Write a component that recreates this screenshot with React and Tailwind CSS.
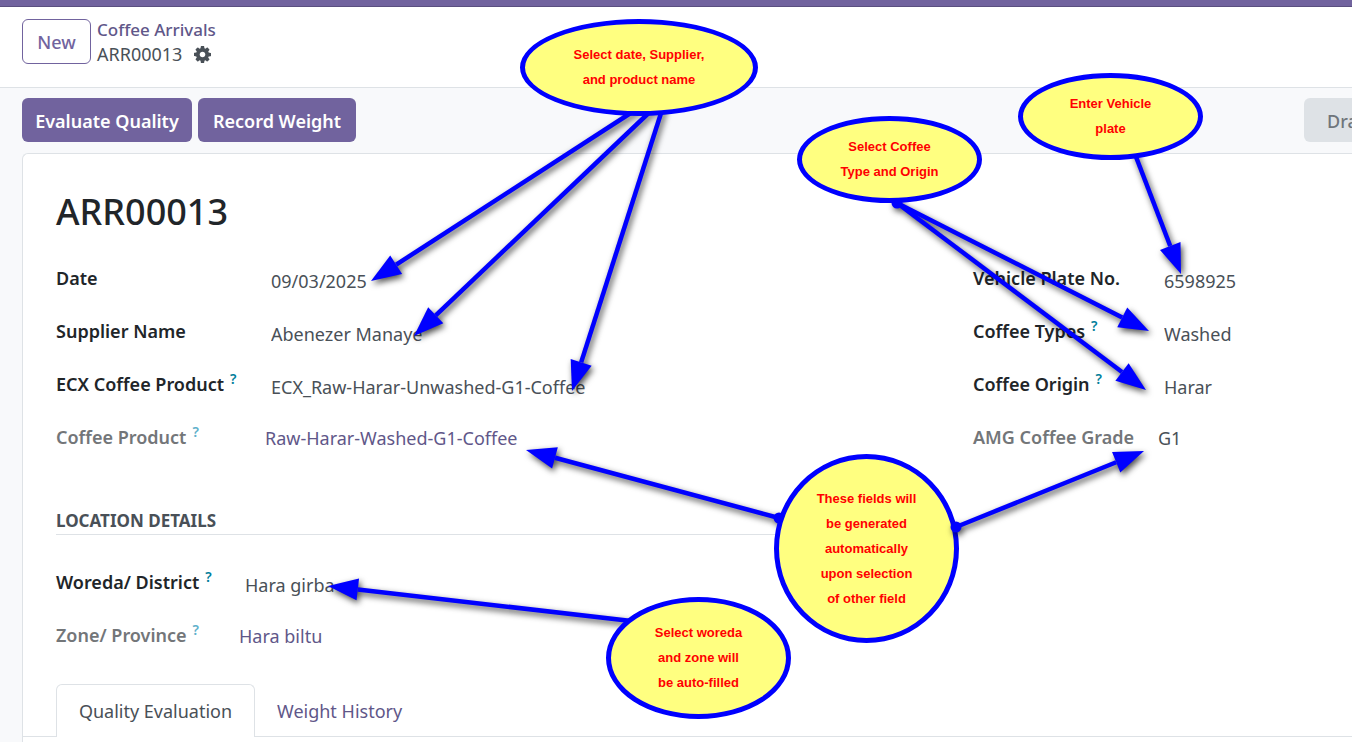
import React from "react";

const arrivalFields = [
  { id: "date", label: "Date", value: "09/03/2025" },
  { id: "supplier", label: "Supplier Name", value: "Abenezer Manaye" },
  { id: "ecx-product", label: "ECX Coffee Product", value: "ECX_Raw-Harar-Unwashed-G1-Coffee", help: true },
  { id: "coffee-product", label: "Coffee Product", value: "Raw-Harar-Washed-G1-Coffee", help: true, readOnly: true, link: true },
];

const coffeeFields = [
  { id: "plate", label: "Vehicle Plate No.", value: "6598925" },
  { id: "types", label: "Coffee Types", value: "Washed", help: true },
  { id: "origin", label: "Coffee Origin", value: "Harar", help: true },
  { id: "grade", label: "AMG Coffee Grade", value: "G1", readOnly: true },
];

const locationFields = [
  { id: "woreda", label: "Woreda/ District", value: "Hara girba", help: true },
  { id: "zone", label: "Zone/ Province", value: "Hara biltu", help: true, readOnly: true, link: true },
];

function CogIcon() {
  return (
    <svg viewBox="0 128 1536 1536" className="size-[17px] fill-current" aria-hidden="true">
      <path d="M1024 896q0-106-75-181t-181-75-181 75-75 181 75 181 181 75 181-75 75-181zm512-109v222q0 12-8 23t-20 13l-185 28q-19 54-39 91 35 50 107 138 10 12 10 25t-9 23q-27 37-99 108t-94 71q-12 0-26-9l-138-108q-44 23-91 38-16 136-29 186-7 28-36 28h-222q-14 0-24.5-8.5t-11.5-21.5l-28-184q-49-16-90-37l-141 107q-10 9-25 9-14 0-25-11-126-114-165-168-7-10-7-23 0-12 8-23 15-21 51-66.5t54-70.5q-27-50-41-99l-183-27q-13-2-21-12.5t-8-23.5v-222q0-12 8-23t19-13l186-28q14-46 39-92-40-57-107-138-10-12-10-24 0-10 9-23 26-36 98.5-107.5t94.5-71.5q13 0 26 10l138 107q44-23 91-38 16-136 29-186 7-28 36-28h222q14 0 24.5 8.5t11.5 21.5l28 184q49 16 90 37l142-107q9-9 24-9 13 0 25 10 129 119 165 170 7 8 7 22 0 12-8 23-15 21-51 66.5t-54 70.5q26 50 41 98l183 28q13 2 21 12.5t8 23.5z" />
    </svg>
  );
}

function Field({ id, label, value, help, readOnly, link, columns }) {
  return (
    <div className={`grid h-[53px] items-center ${columns}`}>
      <label
        htmlFor={link ? undefined : id}
        className={`flex items-center gap-1.5 whitespace-nowrap font-semibold ${readOnly ? "text-[#737679]" : "text-[#212529]"}`}
      >
        {label}
        {help && (
          <sup className={`-top-[5px] text-sm font-semibold ${readOnly ? "text-[#5fb0cb]" : "text-[#017e9b]"}`}>?</sup>
        )}
      </label>
      {link ? (
        <a href="#" className="pt-0.5 text-[#5f5789]">{value}</a>
      ) : readOnly ? (
        <output id={id} className="pt-0.5">{value}</output>
      ) : (
        <input id={id} defaultValue={value} className="mt-1.5 w-full min-w-0 bg-transparent pl-1.5 outline-none" />
      )}
    </div>
  );
}

const HEAD_LENGTH = 30;
const HEAD_HALF = 11;

function Arrow({ from, to, dot }) {
  const [x1, y1] = from;
  const [x2, y2] = to;
  const length = Math.hypot(x2 - x1, y2 - y1);
  const ux = (x2 - x1) / length;
  const uy = (y2 - y1) / length;
  const bx = x2 - ux * HEAD_LENGTH;
  const by = y2 - uy * HEAD_LENGTH;
  const points = [
    [x2, y2],
    [bx - uy * HEAD_HALF, by + ux * HEAD_HALF],
    [bx + uy * HEAD_HALF, by - ux * HEAD_HALF],
  ];
  return (
    <g className="fill-[#0000ff] stroke-[#0000ff]">
      <line x1={x1} y1={y1} x2={bx} y2={by} strokeWidth="4.5" />
      <polygon points={points.map((p) => p.join(",")).join(" ")} stroke="none" />
      {dot && <circle cx={x1} cy={y1} r="5.5" stroke="none" />}
    </g>
  );
}

function ArrowLayer({ children }) {
  return (
    <svg
      aria-hidden="true"
      width="1352"
      height="742"
      viewBox="0 0 1352 742"
      className="pointer-events-none absolute left-0 top-0 drop-shadow-[2px_3px_3px_rgba(0,0,0,0.7)]"
    >
      {children}
    </svg>
  );
}

function Bubble({ place, lines }) {
  return (
    <div
      className={`absolute flex flex-col items-center justify-center rounded-[50%] border-5 border-[#0000ff] bg-[#ffff80] pb-px font-['Liberation_Sans',sans-serif] text-[13px] font-bold leading-[25px] text-[#ff0000] ${place}`}
    >
      {lines.map((line) => (
        <span key={line} className="whitespace-nowrap">{line}</span>
      ))}
    </div>
  );
}

export default function App() {
  return (
    <div className="relative flex min-h-screen flex-col overflow-hidden bg-[#f8f9fb] font-['Noto_Sans',sans-serif] text-[18px] leading-6 text-[#495057]">
      <div className="h-[7px] border-b border-[#5a4f7f] bg-[#71639e]" />

      <header className="flex h-[81px] items-start gap-1.5 border-b border-[#dee2e6] bg-white px-[22px] pt-3">
        <button className="h-[45px] w-[69px] rounded-md border border-[#71639e] font-medium text-[#71639e]">New</button>
        <nav>
          <a href="#" className="block text-[17px] font-medium leading-[22px] text-[#5f5789]">Coffee Arrivals</a>
          <div className="flex items-center gap-3 leading-[26px]">
            <span>ARR00013</span>
            <button aria-label="Actions"><CogIcon /></button>
          </div>
        </nav>
      </header>

      <div className="flex justify-between py-2.5 pl-[22px]">
        <div className="flex gap-1.5">
          <button className="h-11 w-[170px] rounded-md bg-[#71639e] pt-0.5 font-semibold text-white">Evaluate Quality</button>
          <button className="h-11 w-[158px] rounded-md bg-[#71639e] pt-0.5 font-semibold text-white">Record Weight</button>
        </div>
        <div className="w-12 overflow-hidden">
          <button disabled className="h-11 rounded-md bg-[#dee2e6] px-[23px] pt-0.5 font-medium text-[#6f757b]">Draft</button>
        </div>
      </div>

      <main className="ml-[22px] mt-px flex-1 rounded-tl-md border-l border-t border-[#dee2e6] bg-white">
        <div className="pl-[33px] pt-8">
          <h1 className="mb-[13px] text-[36px] font-medium leading-[52px] text-[#212529]">ARR00013</h1>

          <div className="grid grid-cols-[917fr_379fr]">
            <div>
              {arrivalFields.map((field) => (
                <Field key={field.id} {...field} columns="grid-cols-[209px_1fr]" />
              ))}
            </div>
            <div>
              {coffeeFields.map((field) => (
                <Field key={field.id} {...field} columns="grid-cols-[185px_1fr]" />
              ))}
            </div>
          </div>

          <div className="grid grid-cols-[917fr_379fr]">
            <section className="mr-16">
              <h2 className="mb-5 mt-[45px] border-b border-[#dee2e6] text-[17px] font-bold leading-[26px]">LOCATION DETAILS</h2>
              {locationFields.map((field) => (
                <Field key={field.id} {...field} columns="grid-cols-[183px_1fr]" />
              ))}
            </section>
          </div>
        </div>

        <div role="tablist" className="mt-[23px] flex border-b border-[#dee2e6] pl-[33px]">
          <button role="tab" aria-selected="true" className="-mb-px h-[53px] w-[199px] rounded-t-md border border-b-0 border-[#dee2e6] bg-white">
            Quality Evaluation
          </button>
          <button role="tab" aria-selected="false" className="h-[52px] px-[22px] pt-0.5 text-[#5f5789]">Weight History</button>
        </div>
      </main>

      <ArrowLayer>
        <Arrow from={[640, 107]} to={[371, 281]} />
        <Arrow from={[655, 107]} to={[414, 336]} />
        <Arrow from={[663, 107]} to={[572, 391]} />
        <Arrow from={[897, 203]} to={[1149, 331]} dot />
        <Arrow from={[897, 203]} to={[1146, 390]} />
        <Arrow from={[1133, 149]} to={[1181, 274]} />
        <Arrow from={[779, 518]} to={[526, 450]} dot />
        <Arrow from={[640, 622]} to={[328, 586]} />
      </ArrowLayer>

      <Bubble place="left-[520px] top-[19px] h-[97px] w-[238px]" lines={["Select date, Supplier,", "and product name"]} />
      <Bubble place="left-[797px] top-[116px] h-[87px] w-[185px]" lines={["Select Coffee", "Type and Origin"]} />
      <Bubble place="left-[1018px] top-[73px] h-[87px] w-[185px]" lines={["Enter Vehicle", "plate"]} />
      <Bubble
        place="left-[774px] top-[454px] h-[189px] w-[185px]"
        lines={["These fields will", "be generated", "automatically", "upon selection", "of other field"]}
      />
      <Bubble place="left-[606px] top-[597px] h-[122px] w-[185px]" lines={["Select woreda", "and zone will", "be auto-filled"]} />

      <ArrowLayer>
        <Arrow from={[956, 527]} to={[1144, 451]} dot />
      </ArrowLayer>
    </div>
  );
}
